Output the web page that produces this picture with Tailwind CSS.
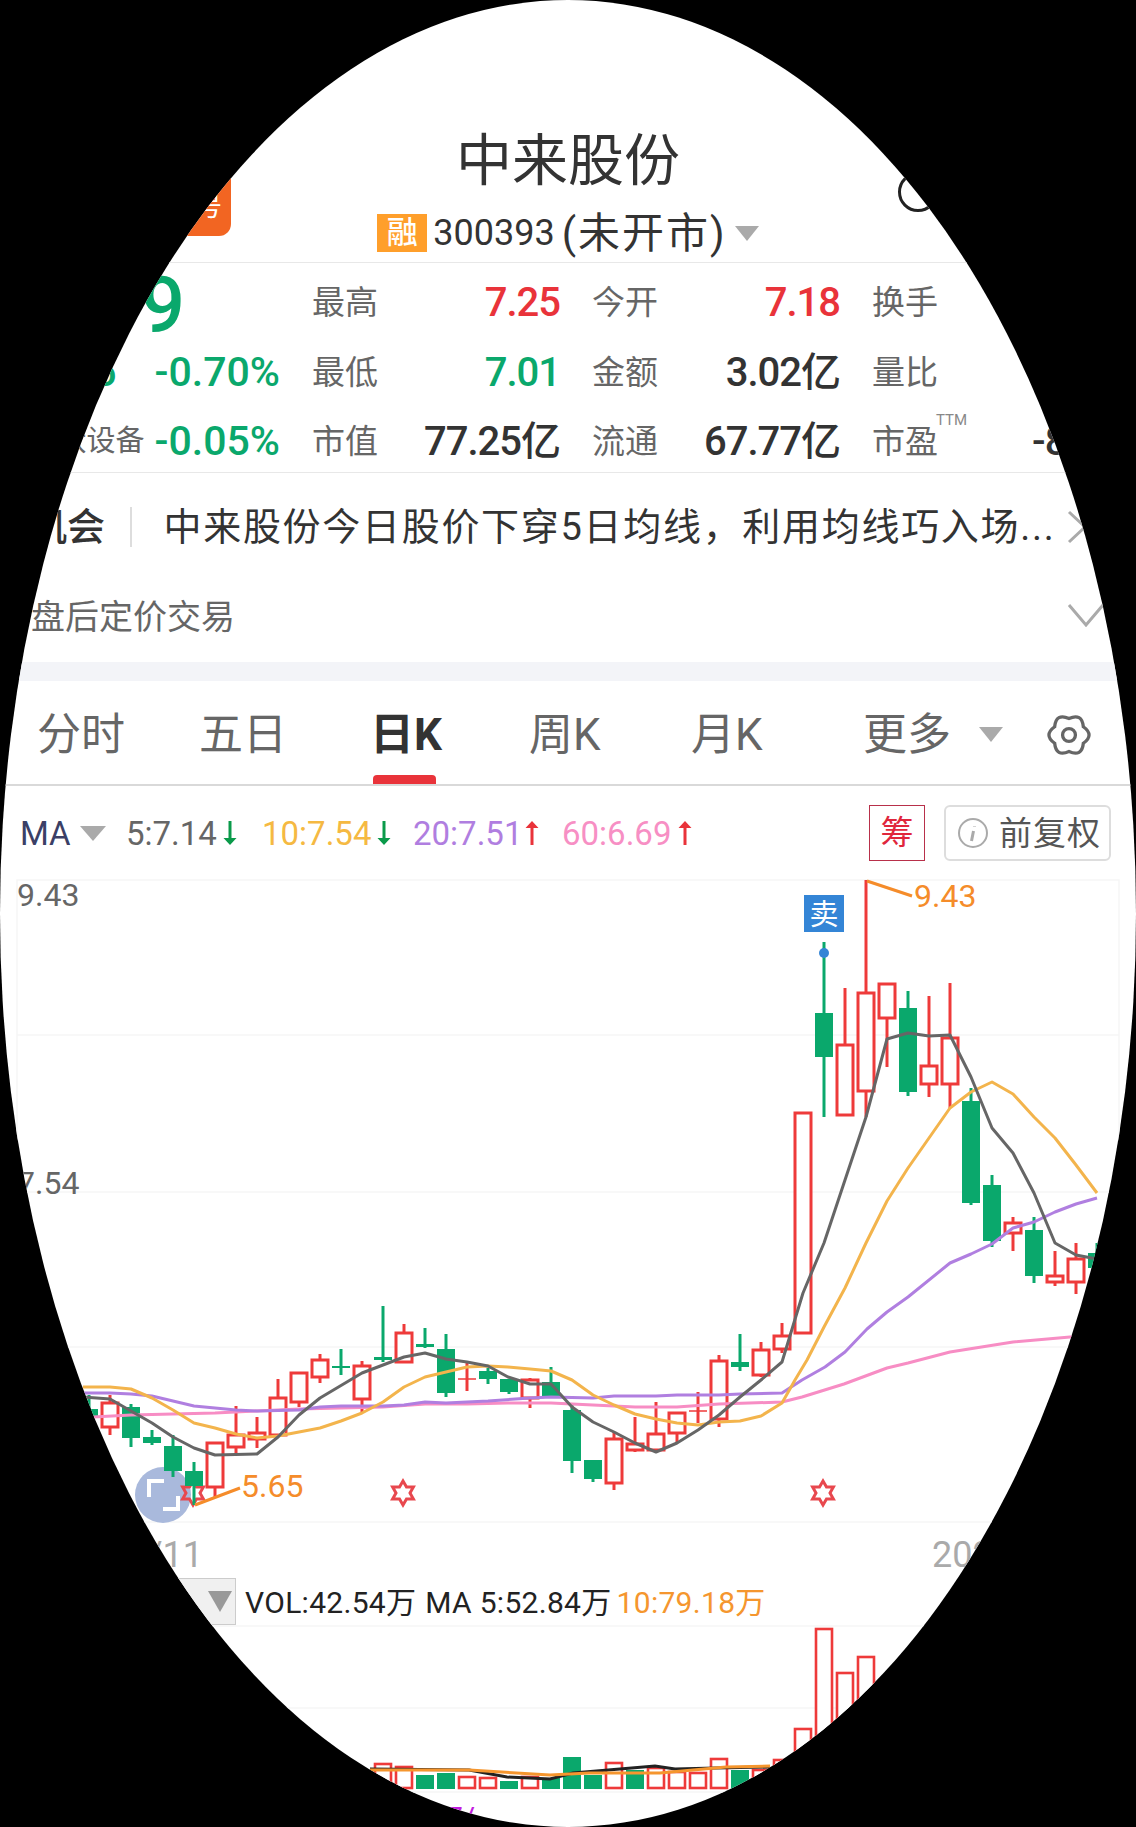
<!DOCTYPE html>
<html lang="zh">
<head>
<meta charset="UTF-8">
<title>中来股份</title>
<script src="https://cdn.jsdelivr.net/npm/@tailwindcss/browser@4"></script>
</head>
<body class="bg-black">
<div class="relative w-[1136px] h-[1827px] overflow-hidden rounded-[50%] bg-white text-[#333] font-[Roboto,'Noto_Sans_CJK_SC',sans-serif]">

  <!-- header -->
  <div class="relative h-[263px] border-b border-[#e8e8e8] flex flex-col items-center">
    <div class="absolute left-[100px] top-[120px] w-[131px] h-[116px] rounded-[12px] bg-[#f26522] text-white text-[26px] leading-none flex items-end justify-end pb-[16px] pr-[9px]">号</div>
    <div class="absolute left-[898px] top-[172px] w-[40px] h-[40px] rounded-full border-[3.5px] border-[#222]"></div>
    <div class="mt-[133px] h-[56px] text-[56px] leading-[56px]">中来股份</div>
    <div class="mt-[25px] flex items-center h-[38px]">
      <span class="w-[50px] h-[38px] bg-[#ff9f2b] text-white text-[31px] font-medium leading-[38px] text-center">融</span>
      <span class="ml-[6px] text-[36px]">300393</span>
      <span class="ml-[7px] text-[42px] tracking-[2px]">(未开市)</span>
      <span class="ml-[8px] w-0 h-0 border-x-[12px] border-x-transparent border-t-[15px] border-t-[#aaa]"></span>
    </div>
  </div>

  <!-- quote -->
  <div class="h-[210px] pt-[5px] border-b border-[#e8e8e8] text-[#666]">
    <div class="flex items-center h-[70px]">
      <div class="w-[280px] pr-[95px] pt-[6px] text-right text-[78px] font-medium leading-none text-[#0aa86c]">7.09</div>
      <div class="ml-[32px] w-[248px] flex justify-between items-center text-[33px]"><span>最高</span><span class="text-[40px] font-medium tracking-[-1px] text-[#e9333a]">7.25</span></div>
      <div class="ml-[32px] w-[248px] flex justify-between items-center text-[33px]"><span>今开</span><span class="text-[40px] font-medium tracking-[-1px] text-[#e9333a]">7.18</span></div>
      <div class="ml-[32px] w-[248px] flex justify-between items-center text-[33px]"><span>换手</span><span class="text-[40px] font-medium tracking-[-1px] text-[#333]">3.34%</span></div>
    </div>
    <div class="flex items-center h-[70px]">
      <div class="w-[280px] flex justify-end items-center font-medium text-[#0aa86c] text-[41px]"><span class="mr-[38px]">-0.05</span><span>-0.70%</span></div>
      <div class="ml-[32px] w-[248px] flex justify-between items-center text-[33px]"><span>最低</span><span class="text-[40px] font-medium tracking-[-1px] text-[#0aa86c]">7.01</span></div>
      <div class="ml-[32px] w-[248px] flex justify-between items-center text-[33px]"><span>金额</span><span class="text-[40px] font-medium tracking-[-1px] text-[#333]">3.02亿</span></div>
      <div class="ml-[32px] w-[248px] flex justify-between items-center text-[33px]"><span>量比</span><span class="text-[40px] font-medium tracking-[-1px] text-[#333]">0.65</span></div>
    </div>
    <div class="flex items-center h-[65px] pt-[3px]">
      <div class="w-[280px] flex justify-end items-center"><span class="mr-[10px] text-[29px] text-[#666]">光伏设备</span><span class="text-[41px] font-medium text-[#0aa86c]">-0.05%</span></div>
      <div class="ml-[32px] w-[248px] flex justify-between items-center text-[33px]"><span>市值</span><span class="text-[40px] font-medium tracking-[-1px] text-[#333]">77.25亿</span></div>
      <div class="ml-[32px] w-[248px] flex justify-between items-center text-[33px]"><span>流通</span><span class="text-[40px] font-medium tracking-[-1px] text-[#333]">67.77亿</span></div>
      <div class="ml-[32px] w-[248px] flex justify-between items-center text-[33px]"><span class="relative">市盈<span class="absolute left-[64px] top-[-8px] text-[15px] text-[#888]">TTM</span></span><span class="text-[40px] font-medium tracking-[-1px] text-[#333]">-86.5</span></div>
    </div>
  </div>

  <!-- news -->
  <div class="h-[106px] pt-[2px] flex items-center whitespace-nowrap">
    <div class="w-[105px] text-right text-[38px] font-medium">机会</div>
    <div class="ml-[25px] w-[1.5px] h-[40px] bg-[#ddd]"></div>
    <div class="ml-[32px] w-[892px] text-[38px] tracking-[1.7px] overflow-hidden">中来股份今日股价下穿5日均线，利用均线巧入场...</div>
    <svg class="ml-[10px]" width="22" height="34" viewBox="0 0 22 34" fill="none" stroke="#aaa" stroke-width="3"><path d="M3 2l16 15L3 32"/></svg>
  </div>

  <!-- after hours -->
  <div class="h-[83px] pl-[31px] pr-[31px] pt-[13px] flex items-start justify-between text-[34px] leading-[50px] text-[#666]">
    <span>盘后定价交易</span>
    <svg class="mt-[11px]" width="38" height="24" viewBox="0 0 38 24" fill="none" stroke="#aaa" stroke-width="3"><path d="M2 2l17 20L36 2"/></svg>
  </div>

  <div class="h-[19px] bg-[#f3f4f8]"></div>

  <!-- period tabs -->
  <div class="relative h-[105px] border-b-2 border-[#d9d9d9] pl-[37px] pt-[4px] flex items-center text-[44px] text-[#666]">
    <span class="w-[162px]">分时</span>
    <span class="w-[171px]">五日</span>
    <span class="w-[159px] font-bold text-[#333]">日K</span>
    <span class="w-[162px]">周K</span>
    <span class="w-[172px]">月K</span>
    <span>更多</span>
    <span class="ml-[28px] w-0 h-0 border-x-[12px] border-x-transparent border-t-[15px] border-t-[#aaa]"></span>
    <svg class="ml-[43px]" width="46" height="46" viewBox="0 0 50 50" fill="none" stroke="#666" stroke-width="3.6"><path d="M40.6 16Q53 25 40.6 34Q39 49.2 25 43Q11 49.2 9.4 34Q-3 25 9.4 16Q11 .8 25 7Q39 .8 40.6 16Z"/><circle cx="25" cy="25" r="7"/></svg>
    <span class="absolute left-[373px] top-[94px] w-[63px] h-[9px] rounded-t-[4px] bg-[#e9333a]"></span>
  </div>

  <!-- indicators -->
  <div class="h-[94px] pl-[20px] flex items-center text-[33px] whitespace-nowrap">
    <span class="mt-[2px] w-[47px] text-[#3b3f66]">MA</span>
    <span class="ml-[13px] w-0 h-0 border-x-[13px] border-x-transparent border-t-[15px] border-t-[#aaa]"></span>
    <span class="mt-[2px] ml-[20px] w-[91px] text-[#666]">5:7.14</span>
    <svg class="ml-[5px]" width="16" height="26" viewBox="0 0 16 26"><path d="M6.5 1h3v17h5L8 25 1.5 18h5z" fill="#0a9a4a"/></svg>
    <span class="mt-[2px] ml-[24px] w-[109px] text-[#f5b942]">10:7.54</span>
    <svg class="ml-[5px]" width="16" height="26" viewBox="0 0 16 26"><path d="M6.5 1h3v17h5L8 25 1.5 18h5z" fill="#0a9a4a"/></svg>
    <span class="mt-[2px] ml-[21px] w-[106px] text-[#b07ee0]">20:7.51</span>
    <svg class="ml-[5px]" width="16" height="26" viewBox="0 0 16 26"><path d="M6.5 25h3V8h5L8 1 1.5 8h5z" fill="#e9333a"/></svg>
    <span class="mt-[2px] ml-[22px] w-[110px] text-[#f78fc4]">60:6.69</span>
    <svg class="ml-[5px]" width="16" height="26" viewBox="0 0 16 26"><path d="M6.5 25h3V8h5L8 1 1.5 8h5z" fill="#e9333a"/></svg>
    <span class="ml-[176px] w-[56px] h-[56px] border border-[#b8304a] text-[#e0263c] text-[33px] leading-[54px] text-center">筹</span>
    <span class="ml-[19px] w-[167px] h-[56px] rounded-[6px] border-2 border-[#ddd] flex items-center pl-[11px] text-[33px] text-[#555]">
      <svg width="32" height="32" viewBox="0 0 32 32" fill="none" stroke="#aaa" stroke-width="2"><circle cx="16" cy="16" r="14"/><path d="M17.5 9v.6M16.5 14l-2 10" stroke-width="3"/></svg>
      <span class="mt-[2px] ml-[10px] tracking-[1px]">前复权</span>
    </span>
  </div>

  <!-- candle chart -->
  <svg id="kline" class="block overflow-visible" width="1136" height="698" viewBox="0 880 1136 698" font-size="32"></svg>

  <!-- volume header -->
  <div class="h-[47px] flex items-center whitespace-nowrap text-[30px] tracking-[.3px] text-[#222]">
    <div class="w-[236px] h-[47px] bg-[#f0f0f0] border border-[#ccc] flex items-center justify-end pr-[3px] text-[#999]">
      <span class="text-[28px]">VOL</span>
      <span class="ml-[14px] w-0 h-0 border-x-[12px] border-x-transparent border-t-[21px] border-t-[#999]"></span>
    </div>
    <span class="mt-[2px] ml-[9px]">VOL:42.54万</span>
    <span class="mt-[2px] ml-[9px]">MA 5:52.84万</span>
    <span class="mt-[2px] ml-[5px] text-[#f5962e]">10:79.18万</span>
  </div>

  <!-- volume chart -->
  <svg id="vol" class="block overflow-visible" width="1136" height="202" viewBox="0 1625 1136 202"></svg>
</div>

<script>
const RED = '#ee3a3a', GREEN = '#0aa86c';

// x, wick top, wick bottom, body top, body bottom, up?
const candles = [
  [89,1395,1425,1409,1416,0],[110,1395,1435,1403,1427,1],[131,1404,1447,1407,1438,0],[152,1430,1445,1437,1443,0],
  [173,1435,1477,1446,1471,0],[194,1462,1505,1471,1486,0],[215,1443,1497,1443,1487,1],[236,1406,1453,1435,1447,1],
  [257,1417,1448,1433,1439,1],[278,1379,1435,1398,1435,1],[299,1372,1407,1373,1402,1],[320,1354,1383,1360,1377,1],
  [341,1349,1375,1366,1368,0],[362,1361,1412,1366,1399,1],[383,1306,1362,1357,1360,0],[404,1324,1363,1333,1362,1],
  [425,1328,1348,1344,1347,0],[446,1334,1397,1349,1393,0],[467,1363,1391,1379,1379,1],[488,1368,1384,1371,1379,0],
  [509,1379,1394,1379,1392,0],[530,1378,1408,1380,1398,1],[551,1367,1397,1382,1397,0],[572,1405,1473,1410,1461,0],
  [593,1460,1482,1460,1479,0],[614,1432,1490,1439,1483,1],[635,1417,1452,1444,1450,1],[656,1402,1452,1434,1450,1],
  [677,1412,1443,1413,1433,1],[698,1392,1423,1411,1411,1],[719,1355,1427,1361,1419,1],[740,1334,1371,1362,1367,0],
  [761,1342,1377,1350,1375,1],[782,1323,1353,1336,1349,1],[803,1113,1333,1113,1333,1],[824,942,1117,1013,1057,0],
  [845,988,1115,1045,1115,1],[866,880,1117,993,1091,1],[887,984,1067,984,1018,1],[908,991,1096,1008,1092,0],
  [929,996,1097,1066,1084,1],[950,983,1108,1038,1084,1],[971,1088,1205,1101,1203,0],[992,1175,1247,1185,1241,0],
  [1013,1217,1251,1223,1233,1],[1034,1217,1283,1230,1276,0],[1055,1251,1286,1276,1282,1],[1076,1243,1294,1259,1282,1],
  [1097,1243,1290,1253,1268,0]
];
const ma5 = '83,1397 110,1399 131,1411 152,1423 173,1437 194,1448 215,1455 257,1454 278,1437 299,1415 320,1398 362,1373 383,1365 404,1357 425,1353 446,1359 467,1362 488,1366 508,1377 530,1384 551,1384 572,1407 593,1422 614,1432 635,1443 656,1452 677,1443 698,1430 719,1415 740,1397 761,1380 782,1362 803,1293 824,1243 845,1180 866,1117 887,1039 908,1033 929,1036 950,1035 971,1077 992,1128 1013,1153 1034,1193 1055,1243 1076,1255 1097,1259';
const ma10 = '83,1387 110,1387 131,1389 152,1398 173,1410 194,1423 215,1428 236,1434 257,1438 278,1436 299,1432 320,1428 341,1421 362,1413 383,1402 404,1387 425,1377 446,1372 467,1367 488,1366 508,1367 530,1369 551,1371 572,1380 593,1395 614,1405 635,1414 656,1419 677,1423 698,1425 719,1422 740,1421 761,1416 782,1403 795,1380 807,1360 824,1327 845,1288 866,1243 887,1201 908,1168 929,1138 950,1108 971,1092 992,1082 1013,1094 1034,1117 1055,1138 1076,1165 1097,1193';
const ma20 = '83,1393 110,1393 131,1394 152,1396 173,1401 194,1406 215,1408 236,1410 257,1411 299,1410 320,1407 341,1406 383,1406 404,1405 425,1402 446,1403 488,1401 530,1398 551,1397 593,1398 614,1396 656,1396 677,1395 719,1395 740,1394 782,1393 802,1380 825,1367 845,1352 867,1329 887,1312 908,1297 950,1263 971,1254 992,1244 1013,1228 1034,1222 1055,1212 1076,1204 1097,1198';
const ma60 = '93,1417 131,1415 173,1414 215,1413 257,1411 299,1409 341,1408 383,1407 425,1404 467,1404 508,1403 551,1403 593,1405 635,1407 677,1407 719,1404 782,1402 802,1397 844,1384 887,1368 908,1363 950,1352 1013,1342 1070,1337 1100,1335';

function star(cx, cy) {
  const p = [];
  for (let i = 0; i < 12; i++) {
    const r = i % 2 ? 7 : 12, a = i * Math.PI / 6 - Math.PI / 2;
    p.push((cx + r * Math.cos(a)).toFixed(1) + ',' + (cy + r * Math.sin(a)).toFixed(1));
  }
  return `<polygon points="${p.join(' ')}" fill="none" stroke="#e8484e" stroke-width="3"/>`;
}

let k = '<rect x="17" y="880" width="1102" height="642" fill="none" stroke="#f6f6f6" stroke-width="1.5"/>';
[1035, 1192, 1347].forEach(y => { k += `<line x1="17" x2="1119" y1="${y}" y2="${y}" stroke="#f6f6f6" stroke-width="1.5"/>`; });
k += '<circle cx="163" cy="1495" r="28" fill="#a9b9dc"/><path d="M149 1497V1481H164M178 1496V1509H163" fill="none" stroke="#fff" stroke-width="4"/>';
k += star(193, 1493) + star(403, 1493) + star(823, 1493);
candles.forEach(([x, hi, lo, top, bot, up]) => {
  const c = up ? RED : GREEN;
  k += `<line x1="${x}" x2="${x}" y1="${hi}" y2="${lo}" stroke="${c}" stroke-width="3"/>`;
  if (top === bot) k += `<line x1="${x - 9}" x2="${x + 9}" y1="${top}" y2="${top}" stroke="${c}" stroke-width="1.5"/>`;
  else if (up) k += `<rect x="${x - 8}" y="${top}" width="16" height="${bot - top}" fill="#fff" stroke="${c}" stroke-width="3"/>`;
  else k += `<rect x="${x - 9}" y="${top}" width="18" height="${bot - top}" fill="${c}"/>`;
});
[[ma60, '#f78dc4'], [ma20, '#b07fe0'], [ma10, '#f3b44c'], [ma5, '#666']].forEach(([pts, c]) => {
  k += `<polyline points="${pts}" fill="none" stroke="${c}" stroke-width="3" stroke-linejoin="round"/>`;
});
k += '<circle cx="824" cy="953" r="5" fill="#3485d6"/><rect x="804" y="895" width="40" height="37" fill="#3485d6"/>';
k += '<text x="824" y="925" font-size="29" fill="#fff" text-anchor="middle">卖</text>';
k += '<path d="M867 881L912 896M195 1505L240 1488" fill="none" stroke="#f58c2a" stroke-width="3"/>';
k += '<text x="914" y="907" font-size="32" fill="#f58c2a">9.43</text><text x="241" y="1497" font-size="32" fill="#f58c2a">5.65</text>';
k += '<text x="17" y="906" fill="#666">9.43</text><text x="17" y="1194" fill="#666">7.54</text>';
k += '<text x="203" y="1567" font-size="36" fill="#aaa" text-anchor="end">2023/11</text><text x="932" y="1567" font-size="36" fill="#aaa">2024/01</text>';
document.getElementById('kline').innerHTML = k;

// x, top of bar, up?
const bars = [
  [383,1764,1],[404,1767,1],[425,1775,0],[446,1773,0],[467,1777,1],[488,1778,1],[509,1781,0],[530,1777,1],[551,1778,0],[572,1757,0],
  [593,1775,0],[614,1763,1],[635,1770,0],[656,1768,1],[677,1772,1],[698,1773,1],[719,1759,1],[740,1770,0],[761,1770,1],[782,1760,1],
  [803,1729,1],[824,1629,1],[845,1673,1],[866,1657,1]
];
let v = '';
[1708, 1792].forEach(y => { v += `<line x1="17" x2="1119" y1="${y}" y2="${y}" stroke="#f6f6f6" stroke-width="1.5"/>`; });
v += '<line x1="17" x2="1119" y1="1626" y2="1626" stroke="#f6f6f6" stroke-width="1.5"/>';
bars.forEach(([x, top, up]) => {
  if (up) v += `<rect x="${x - 8}" y="${top}" width="16" height="${1788 - top}" fill="#fff" stroke="${RED}" stroke-width="2.6"/>`;
  else v += `<rect x="${x - 9}" y="${top}" width="18" height="${1789 - top}" fill="${GREEN}"/>`;
});
v += '<polyline points="370,1769 469,1770 507,1777 550,1779 573,1773 655,1766 675,1769 716,1768 770,1767" fill="none" stroke="#222" stroke-width="3"/>';
v += '<polyline points="370,1770 469,1770 550,1775 589,1773 660,1773 726,1767 770,1766" fill="none" stroke="#f5962e" stroke-width="3"/>';
v += '<text x="446" y="1828" font-size="30" fill="#c21be0">7/</text>';
document.getElementById('vol').innerHTML = v;
</script>
</body>
</html>
